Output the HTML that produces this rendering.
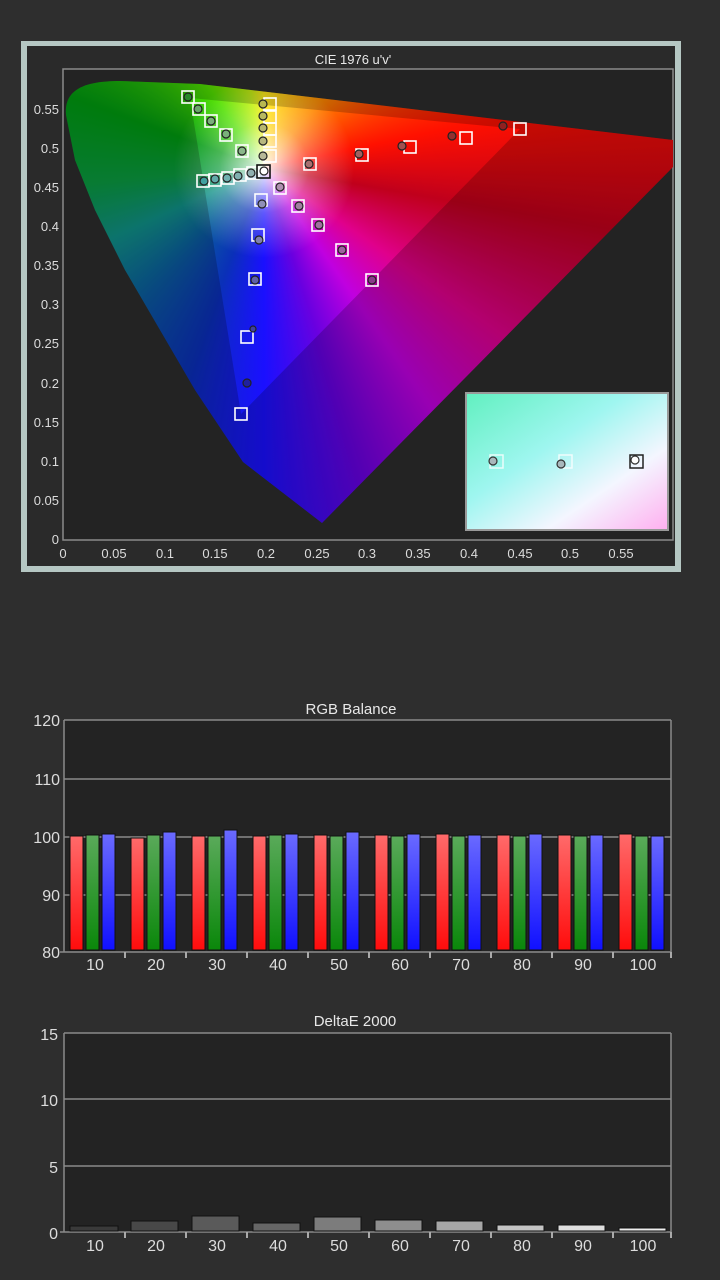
<!DOCTYPE html>
<html><head><meta charset="utf-8"><style>
html,body{margin:0;padding:0;background:#2e2e2e;}
svg{display:block;font-family:"Liberation Sans",sans-serif;}
</style></head><body>
<svg width="720" height="1280" viewBox="0 0 720 1280" xmlns="http://www.w3.org/2000/svg">
<defs>
<clipPath id="hs"><path d="M322,523 L243,462 L195,390 L160,330 L125,270 L95,210 L75,160 L66,115 C64,92 80,81 120,81 L200,84 L673,140 L673,167 Z"/></clipPath>
<clipPath id="plot"><rect x="63" y="69" width="610" height="471"/></clipPath>
<radialGradient id="wh" cx="264" cy="168" r="90" gradientUnits="userSpaceOnUse">
<stop offset="0" stop-color="#fff" stop-opacity="0.95"/><stop offset="0.5" stop-color="#fff" stop-opacity="0.3"/><stop offset="1" stop-color="#fff" stop-opacity="0"/></radialGradient>
<linearGradient id="ins" x1="0" y1="0" x2="1" y2="1">
<stop offset="0" stop-color="#62f0c0"/><stop offset="0.4" stop-color="#9ff6f0"/><stop offset="0.7" stop-color="#f4f6ff"/><stop offset="1" stop-color="#ffb0f0"/></linearGradient>
<linearGradient id="gr" x1="0" y1="0" x2="0" y2="1"><stop offset="0" stop-color="#ff6a6a"/><stop offset="1" stop-color="#ff0c0c"/></linearGradient>
<linearGradient id="gg" x1="0" y1="0" x2="0" y2="1"><stop offset="0" stop-color="#5aaa5a"/><stop offset="1" stop-color="#0a870a"/></linearGradient>
<linearGradient id="gb" x1="0" y1="0" x2="0" y2="1"><stop offset="0" stop-color="#6a6aff"/><stop offset="1" stop-color="#1010ff"/></linearGradient>
</defs>

<rect x="21" y="41" width="660" height="531" fill="#b5c7c3"/>
<rect x="27" y="46" width="648" height="520" fill="#2a2a2a"/>
<text x="353" y="64" fill="#e8e8e8" font-size="13" text-anchor="middle">CIE 1976 u'v'</text>
<rect x="63" y="69" width="610" height="471" fill="#232323" stroke="#8a8a8a" stroke-width="1.5"/>
<g clip-path="url(#plot)">
<g clip-path="url(#hs)">
<foreignObject x="0" y="0" width="720" height="560">
<div xmlns="http://www.w3.org/1999/xhtml" style="width:720px;height:560px;background:conic-gradient(from 0deg at 264px 168px,#ffe800 0deg,#ff8a00 40deg,#ff1000 78deg,#c0001c 100deg,#e0008c 125deg,#c000e0 145deg,#6a00e0 162deg,#1a10ff 180deg,#0a30b8 200deg,#0a5aa0 222deg,#109088 245deg,#0a9a40 265deg,#009a10 290deg,#50e000 325deg,#c0f000 350deg,#ffe800 360deg);"></div>
</foreignObject>
<rect x="0" y="0" width="720" height="560" fill="url(#wh)"/>
<path d="M0,0 H720 V560 H0 Z M190,98 L520,129 L241,414 Z" fill="#000" fill-opacity="0.2" fill-rule="evenodd"/>
</g>
</g>
<rect x="465" y="392" width="204" height="139" fill="#999"/>
<rect x="467" y="394" width="200" height="135" fill="url(#ins)"/>
<g stroke="#fff" stroke-width="1.5" fill="none" opacity="0.8">
<rect x="490" y="455" width="13" height="13"/><rect x="559" y="455" width="13" height="13"/></g>
<rect x="630" y="455" width="13" height="13" fill="none" stroke="#222" stroke-width="1.5"/>
<g stroke="#333" stroke-width="1.2" fill="#a9b8bc"><circle cx="493" cy="461" r="4"/><circle cx="561" cy="464" r="4"/></g>
<circle cx="635" cy="460" r="4" fill="#fff" stroke="#333" stroke-width="1.2"/>

<g stroke="#fff" stroke-width="1.6" fill="none">
<rect x="182" y="91" width="12" height="12"/><rect x="193" y="103" width="12" height="12"/><rect x="205" y="115" width="12" height="12"/><rect x="220" y="129" width="12" height="12"/><rect x="236" y="145" width="12" height="12"/>
<rect x="264" y="98" width="12" height="12"/><rect x="264" y="111" width="12" height="12"/><rect x="264" y="123" width="12" height="12"/><rect x="264" y="135" width="12" height="12"/><rect x="264" y="150" width="12" height="12"/>
<rect x="197" y="175" width="12" height="12"/><rect x="209" y="174" width="12" height="12"/><rect x="222" y="172" width="12" height="12"/><rect x="234" y="169" width="12" height="12"/><rect x="247" y="167" width="12" height="12"/>
<rect x="255" y="194" width="12" height="12"/><rect x="252" y="229" width="12" height="12"/><rect x="249" y="273" width="12" height="12"/><rect x="241" y="331" width="12" height="12"/><rect x="235" y="408" width="12" height="12"/>
<rect x="274" y="182" width="12" height="12"/><rect x="292" y="200" width="12" height="12"/><rect x="312" y="219" width="12" height="12"/><rect x="336" y="244" width="12" height="12"/><rect x="366" y="274" width="12" height="12"/>
<rect x="304" y="158" width="12" height="12"/><rect x="356" y="149" width="12" height="12"/><rect x="404" y="141" width="12" height="12"/><rect x="460" y="132" width="12" height="12"/><rect x="514" y="123" width="12" height="12"/>
</g>
<rect x="257" y="165" width="13" height="13" fill="none" stroke="#111" stroke-width="1.6"/>
<g stroke="#222" stroke-width="1.2">
<circle cx="188" cy="97" r="4" fill="#2a8a2a"/><circle cx="198" cy="109" r="4" fill="#6aa86a"/><circle cx="211" cy="121" r="4" fill="#7ab07a"/><circle cx="226" cy="134" r="4" fill="#7ab07a"/><circle cx="242" cy="151" r="4" fill="#8ab88a"/>
<circle cx="263" cy="104" r="4" fill="#b8b850"/><circle cx="263" cy="116" r="4" fill="#b8b860"/><circle cx="263" cy="128" r="4" fill="#b8b870"/><circle cx="263" cy="141" r="4" fill="#b8b880"/><circle cx="263" cy="156" r="4" fill="#b8b898"/>
<circle cx="204" cy="181" r="4" fill="#40a0a0"/><circle cx="215" cy="179" r="4" fill="#60aaaa"/><circle cx="227" cy="178" r="4" fill="#70b0b0"/><circle cx="238" cy="176" r="4" fill="#80b0b0"/><circle cx="251" cy="173" r="4" fill="#90b0b0"/>
<circle cx="262" cy="204" r="4" fill="#9090b8"/><circle cx="259" cy="240" r="4" fill="#8080b0"/><circle cx="255" cy="280" r="4" fill="#6060a8"/><circle cx="253" cy="329" r="3" fill="#4040a0"/><circle cx="247" cy="383" r="4" fill="#2020a0"/>
<circle cx="280" cy="187" r="4" fill="#b090b0"/><circle cx="299" cy="206" r="4" fill="#a080a0"/><circle cx="319" cy="225" r="4" fill="#a070a0"/><circle cx="342" cy="250" r="4" fill="#a060a0"/><circle cx="372" cy="280" r="4" fill="#8a3a8a"/>
<circle cx="309" cy="164" r="4" fill="#a87070"/><circle cx="359" cy="154" r="4" fill="#a06060"/><circle cx="402" cy="146" r="4" fill="#a05050"/><circle cx="452" cy="136" r="4" fill="#903030"/><circle cx="503" cy="126" r="4" fill="#902020"/>
</g>
<circle cx="264" cy="171" r="4" fill="#fff" stroke="#222" stroke-width="1.2"/>

<g fill="#dcdcdc" font-size="13">
<g text-anchor="end">
<text x="59" y="114">0.55</text><text x="59" y="153">0.5</text><text x="59" y="192">0.45</text><text x="59" y="231">0.4</text><text x="59" y="270">0.35</text><text x="59" y="309">0.3</text><text x="59" y="348">0.25</text><text x="59" y="388">0.2</text><text x="59" y="427">0.15</text><text x="59" y="466">0.1</text><text x="59" y="505">0.05</text><text x="59" y="544">0</text>
</g>
<g text-anchor="middle">
<text x="63" y="558">0</text><text x="114" y="558">0.05</text><text x="165" y="558">0.1</text><text x="215" y="558">0.15</text><text x="266" y="558">0.2</text><text x="317" y="558">0.25</text><text x="367" y="558">0.3</text><text x="418" y="558">0.35</text><text x="469" y="558">0.4</text><text x="520" y="558">0.45</text><text x="570" y="558">0.5</text><text x="621" y="558">0.55</text>
</g></g>

<text x="351" y="714" fill="#e8e8e8" font-size="15" text-anchor="middle">RGB Balance</text>
<rect x="64" y="720" width="607" height="231" fill="#232323"/>
<g stroke="#8a8a8a" stroke-width="1.5">
<line x1="64" y1="720" x2="671" y2="720"/><line x1="64" y1="779" x2="671" y2="779"/><line x1="64" y1="837" x2="671" y2="837"/><line x1="64" y1="895" x2="671" y2="895"/>
<line x1="64" y1="720" x2="64" y2="952"/><line x1="671" y1="720" x2="671" y2="952"/><line x1="60" y1="952" x2="671" y2="952"/>
</g>
<g stroke="#111" stroke-width="1">
<rect x="70" y="836" width="13" height="114" fill="url(#gr)"/><rect x="86" y="835" width="13" height="115" fill="url(#gg)"/><rect x="102" y="834" width="13" height="116" fill="url(#gb)"/>
<rect x="131" y="838" width="13" height="112" fill="url(#gr)"/><rect x="147" y="835" width="13" height="115" fill="url(#gg)"/><rect x="163" y="832" width="13" height="118" fill="url(#gb)"/>
<rect x="192" y="836" width="13" height="114" fill="url(#gr)"/><rect x="208" y="836" width="13" height="114" fill="url(#gg)"/><rect x="224" y="830" width="13" height="120" fill="url(#gb)"/>
<rect x="253" y="836" width="13" height="114" fill="url(#gr)"/><rect x="269" y="835" width="13" height="115" fill="url(#gg)"/><rect x="285" y="834" width="13" height="116" fill="url(#gb)"/>
<rect x="314" y="835" width="13" height="115" fill="url(#gr)"/><rect x="330" y="836" width="13" height="114" fill="url(#gg)"/><rect x="346" y="832" width="13" height="118" fill="url(#gb)"/>
<rect x="375" y="835" width="13" height="115" fill="url(#gr)"/><rect x="391" y="836" width="13" height="114" fill="url(#gg)"/><rect x="407" y="834" width="13" height="116" fill="url(#gb)"/>
<rect x="436" y="834" width="13" height="116" fill="url(#gr)"/><rect x="452" y="836" width="13" height="114" fill="url(#gg)"/><rect x="468" y="835" width="13" height="115" fill="url(#gb)"/>
<rect x="497" y="835" width="13" height="115" fill="url(#gr)"/><rect x="513" y="836" width="13" height="114" fill="url(#gg)"/><rect x="529" y="834" width="13" height="116" fill="url(#gb)"/>
<rect x="558" y="835" width="13" height="115" fill="url(#gr)"/><rect x="574" y="836" width="13" height="114" fill="url(#gg)"/><rect x="590" y="835" width="13" height="115" fill="url(#gb)"/>
<rect x="619" y="834" width="13" height="116" fill="url(#gr)"/><rect x="635" y="836" width="13" height="114" fill="url(#gg)"/><rect x="651" y="836" width="13" height="114" fill="url(#gb)"/>
</g>
<g stroke="#aaa" stroke-width="2">
<line x1="125" y1="952" x2="125" y2="958"/><line x1="186" y1="952" x2="186" y2="958"/><line x1="247" y1="952" x2="247" y2="958"/><line x1="308" y1="952" x2="308" y2="958"/><line x1="369" y1="952" x2="369" y2="958"/><line x1="430" y1="952" x2="430" y2="958"/><line x1="491" y1="952" x2="491" y2="958"/><line x1="552" y1="952" x2="552" y2="958"/><line x1="613" y1="952" x2="613" y2="958"/><line x1="671" y1="952" x2="671" y2="958"/>
</g>
<g fill="#dcdcdc" font-size="16">
<g text-anchor="end"><text x="60" y="726">120</text><text x="60" y="785">110</text><text x="60" y="843">100</text><text x="60" y="901">90</text><text x="60" y="958">80</text></g>
<g text-anchor="middle"><text x="95" y="970">10</text><text x="156" y="970">20</text><text x="217" y="970">30</text><text x="278" y="970">40</text><text x="339" y="970">50</text><text x="400" y="970">60</text><text x="461" y="970">70</text><text x="522" y="970">80</text><text x="583" y="970">90</text><text x="643" y="970">100</text></g>
</g>

<text x="355" y="1026" fill="#e8e8e8" font-size="15" text-anchor="middle">DeltaE 2000</text>
<rect x="64" y="1033" width="607" height="199" fill="#232323"/>
<g stroke="#8a8a8a" stroke-width="1.5">
<line x1="64" y1="1033" x2="671" y2="1033"/><line x1="64" y1="1099" x2="671" y2="1099"/><line x1="64" y1="1166" x2="671" y2="1166"/>
<line x1="64" y1="1033" x2="64" y2="1232"/><line x1="671" y1="1033" x2="671" y2="1232"/><line x1="60" y1="1232" x2="671" y2="1232"/>
</g>
<g stroke="#111" stroke-width="1">
<rect x="70" y="1226" width="48" height="5" fill="#3a3a3a"/>
<rect x="131" y="1221" width="47" height="10" fill="#484848"/>
<rect x="192" y="1216" width="47" height="15" fill="#5a5a5a"/>
<rect x="253" y="1223" width="47" height="8" fill="#666"/>
<rect x="314" y="1217" width="47" height="14" fill="#7c7c7c"/>
<rect x="375" y="1220" width="47" height="11" fill="#8e8e8e"/>
<rect x="436" y="1221" width="47" height="10" fill="#a6a6a6"/>
<rect x="497" y="1225" width="47" height="6" fill="#c4c4c4"/>
<rect x="558" y="1225" width="47" height="6" fill="#dedede"/>
<rect x="619" y="1228" width="47" height="3" fill="#eee"/>
</g>
<g stroke="#aaa" stroke-width="2">
<line x1="125" y1="1232" x2="125" y2="1238"/><line x1="186" y1="1232" x2="186" y2="1238"/><line x1="247" y1="1232" x2="247" y2="1238"/><line x1="308" y1="1232" x2="308" y2="1238"/><line x1="369" y1="1232" x2="369" y2="1238"/><line x1="430" y1="1232" x2="430" y2="1238"/><line x1="491" y1="1232" x2="491" y2="1238"/><line x1="552" y1="1232" x2="552" y2="1238"/><line x1="613" y1="1232" x2="613" y2="1238"/><line x1="671" y1="1232" x2="671" y2="1238"/>
</g>
<g fill="#dcdcdc" font-size="16">
<g text-anchor="end"><text x="58" y="1040">15</text><text x="58" y="1106">10</text><text x="58" y="1173">5</text><text x="58" y="1239">0</text></g>
<g text-anchor="middle"><text x="95" y="1251">10</text><text x="156" y="1251">20</text><text x="217" y="1251">30</text><text x="278" y="1251">40</text><text x="339" y="1251">50</text><text x="400" y="1251">60</text><text x="461" y="1251">70</text><text x="522" y="1251">80</text><text x="583" y="1251">90</text><text x="643" y="1251">100</text></g>
</g>
</svg>
</body></html>
